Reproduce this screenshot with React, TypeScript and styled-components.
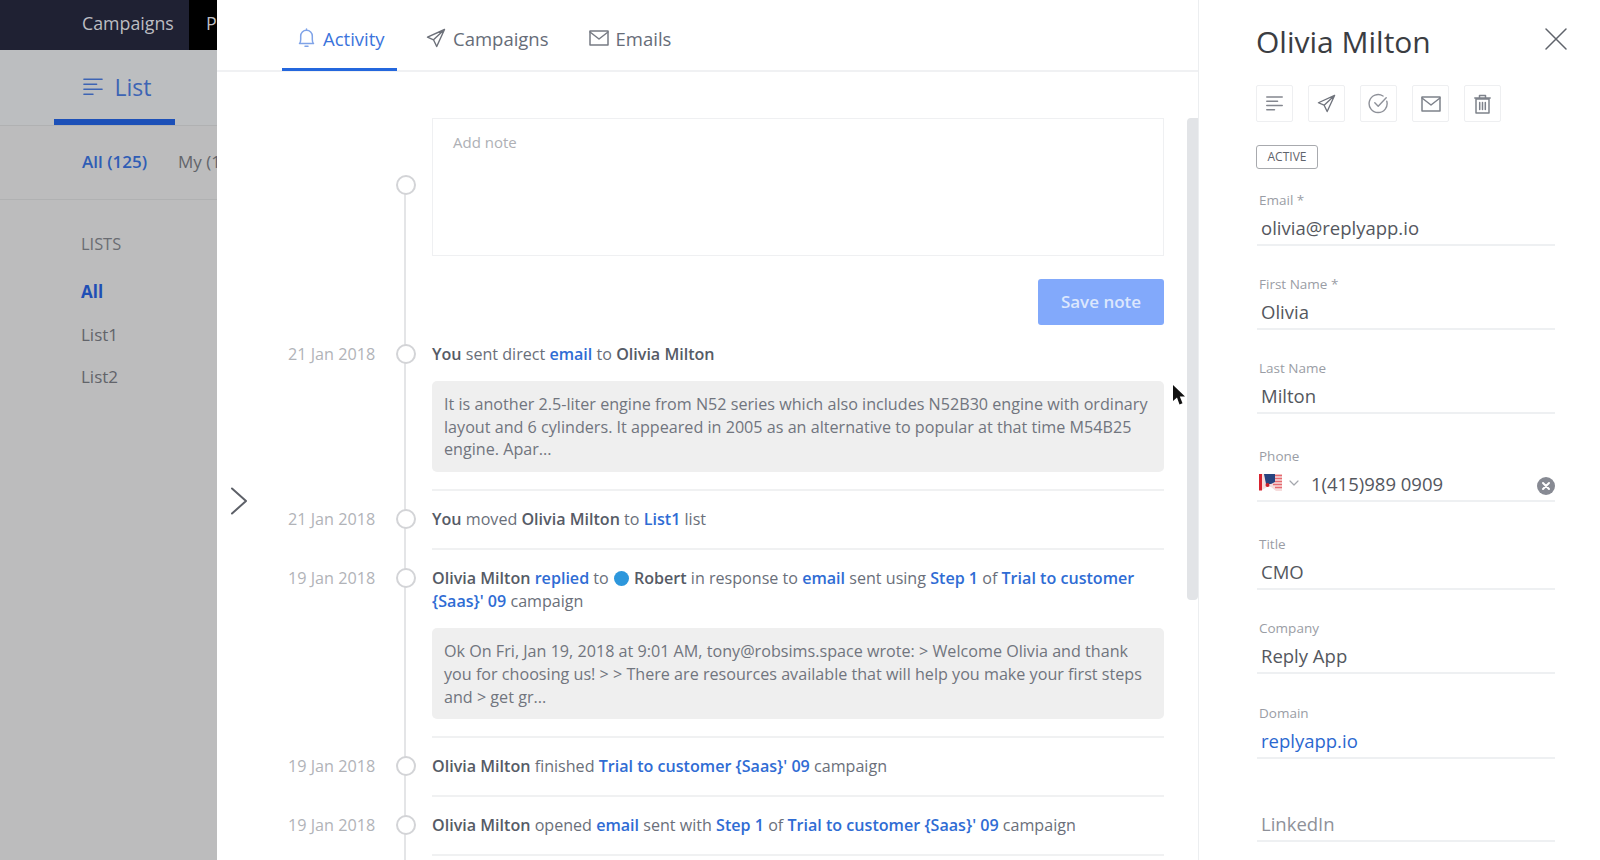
import React from "react";
import styled, { createGlobalStyle } from "styled-components";

const Global = createGlobalStyle`
  html, body { margin: 0; padding: 0; height: 100%; overflow: hidden; background: #fff; }
  body { font-family: "Open Sans", "Liberation Sans", sans-serif; -webkit-font-smoothing: antialiased; }
  * { box-sizing: border-box; }
`;

const Page = styled.div`
  display: flex;
  width: 1600px;
  height: 860px;
  overflow: hidden;
  position: relative;
`;

const Sidebar = styled.aside`
  width: 217px;
  flex: none;
  background: #bcbcbd;
  overflow: hidden;
`;
const TopBar = styled.div`
  height: 50px;
  background: #1f2133;
  display: flex;
  white-space: nowrap;
`;
const TopItem = styled.div<{ $black?: boolean }>`
  flex: none;
  height: 50px;
  line-height: 46px;
  font-size: 17.8px;
  color: #bcbdc2;
  padding: 0 15px 0 ${(p) => (p.$black ? "17px" : "82px")};
  background: ${(p) => (p.$black ? "#000" : "transparent")};
  width: ${(p) => (p.$black ? "40px" : "189px")};
`;
const SideTabs = styled.div`
  height: 76px;
  border-bottom: 1px solid #b0b1b2;
  padding-left: 54px;
  background: #bcbec0;
`;
const SideTab = styled.div`
  width: 121px;
  height: 75px;
  border-bottom: 6px solid #1c50b8;
  display: flex;
  align-items: center;
  justify-content: center;
  gap: 12px;
  font-size: 23px;
  color: #3d64b4;
  padding: 4px 0 0 5px;
`;
const FilterBar = styled.div`
  height: 74px;
  border-bottom: 1px solid #b0b1b2;
  display: flex;
  align-items: center;
  padding: 0 0 2px 82px;
  gap: 31px;
  font-size: 17px;
  white-space: nowrap;
`;
const FilterActive = styled.span`
  color: #2f5db5;
  font-weight: 600;
`;
const FilterItem = styled.span`
  color: #62646a;
`;
const SideList = styled.div`
  padding: 32px 0 0 81px;
  display: flex;
  flex-direction: column;
`;
const SideHeading = styled.div`
  font-size: 16.4px;
  color: #6a6c72;
  line-height: 24px;
  margin-bottom: 24px;
`;
const SideItem = styled.div<{ $active?: boolean }>`
  font-size: 17px;
  line-height: 24px;
  height: 42.5px;
  color: ${(p) => (p.$active ? "#1f4fb5" : "#62646a")};
  font-weight: ${(p) => (p.$active ? 700 : 400)};
`;

const Main = styled.main`
  width: 982px;
  flex: none;
  position: relative;
  border-right: 1px solid #eceef0;
  overflow: hidden;
`;
const MainTabs = styled.div`
  height: 72px;
  border-bottom: 2px solid #f0f1f3;
  padding-left: 65px;
  display: flex;
`;
const MainTab = styled.div<{ $active?: boolean }>`
  height: 71px;
  display: flex;
  align-items: center;
  gap: ${(p) => (p.$active ? "8px" : "7px")};
  padding: 8px ${(p) => (p.$active ? "11px 0 16px" : "0 0 0")};
  margin-right: ${(p) => (p.$active ? "29px" : "40px")};
  width: ${(p) => (p.$active ? "115px" : "auto")};
  font-size: 18.5px;
  white-space: nowrap;
  color: ${(p) => (p.$active ? "#3b74dc" : "#666c78")};
  border-bottom: ${(p) => (p.$active ? "3px solid #2467dd" : "3px solid transparent")};
`;
const Chevron = styled.div`
  position: absolute;
  left: 13px;
  top: 487px;
  line-height: 0;
`;
const Scrollbar = styled.div`
  position: absolute;
  right: 0;
  top: 118px;
  width: 11px;
  height: 482px;
  border-radius: 4px 0 4px 4px;
  background: #e2e4e7;
`;
const Timeline = styled.div`
  position: relative;
  padding: 46px 0 0 71px;
  width: 948px;
  &::before {
    content: "";
    position: absolute;
    left: 187px;
    top: 122px;
    bottom: 0;
    width: 2px;
    background: #e4e5e7;
  }
`;
const Row = styled.div`
  display: grid;
  grid-template-columns: 91px 53px 732px;
  align-items: start;
`;
const DateText = styled.div`
  font-size: 16.2px;
  line-height: 24px;
  color: #b1b3b8;
  white-space: nowrap;
`;
const MarkerCell = styled.div`
  display: flex;
  justify-content: center;
  position: relative;
`;
const Marker = styled.span<{ $top?: number }>`
  width: 20px;
  height: 20px;
  margin-top: ${(p) => p.$top ?? 2}px;
  border: 2px solid #d3d4d7;
  border-radius: 50%;
  background: #fff;
  position: relative;
  z-index: 1;
`;
const NoteBox = styled.div`
  height: 138px;
  border: 1px solid #eff0f2;
  padding: 11px 20px;
  font-size: 15px;
  line-height: 24px;
  color: #aeb0b5;
`;
const SaveRow = styled.div`
  grid-column: 3;
  display: flex;
  justify-content: flex-end;
  margin: 23px 0 17px;
`;
const SaveButton = styled.button`
  width: 126px;
  height: 46px;
  border: 0;
  border-radius: 3px;
  background: #82a9fb;
  color: #dce7fd;
  font: 600 17px "Open Sans", sans-serif;
  padding: 0 0 2px;
`;
const Body = styled.div`
  padding-bottom: 16.5px;
  border-bottom: 2px solid #f0f1f2;
  margin-bottom: 16.5px;
`;
const Sentence = styled.div`
  font-size: 16.1px;
  line-height: 23px;
  color: #6a6f7a;
  margin-top: 1px;
`;
const B = styled.b`
  font-weight: 600;
  color: #565b66;
`;
const A = styled.span`
  color: #2f6cd4;
  font-weight: 600;
`;
const Dot = styled.span`
  display: inline-block;
  width: 15px;
  height: 15px;
  border-radius: 50%;
  background: #2d97dc;
  vertical-align: -2px;
  margin: 0 5px 0 1px;
`;
const Quote = styled.div`
  margin-top: 15px;
  background: #efefef;
  border-radius: 5px;
  padding: 12px 11px 11px 12px;
  font-size: 16.15px;
  line-height: 22.7px;
  color: #71757e;
`;

const Panel = styled.aside`
  flex: 1;
  padding: 21px 0 0 57px;
  position: relative;
  overflow: hidden;
`;
const Title = styled.h1`
  margin: 0;
  font-size: 30px;
  font-weight: 400;
  line-height: 42px;
  color: #3b3d42;
`;
const Close = styled.button`
  position: absolute;
  top: 27px;
  right: 32px;
  border: 0;
  padding: 0;
  background: none;
  line-height: 0;
`;
const Actions = styled.div`
  display: flex;
  gap: 15px;
  margin-top: 22px;
`;
const ActionBtn = styled.div`
  width: 37px;
  height: 37px;
  border: 1px solid #eeeff1;
  border-radius: 2px;
  display: flex;
  align-items: center;
  justify-content: center;
`;
const Status = styled.div`
  width: 62px;
  height: 24px;
  margin: 23px 0 21px;
  border: 1px solid #a8aaae;
  border-radius: 3px;
  font-size: 12px;
  line-height: 22px;
  text-align: center;
  color: #5f636b;
`;
const Field = styled.div<{ $h: number }>`
  height: ${(p) => p.$h}px;
  width: 298px;
  margin-left: 1px;
`;
const FieldLabel = styled.div`
  font-size: 13.5px;
  line-height: 20px;
  color: #9a9da5;
  padding-left: 2px;
`;
const FieldValue = styled.div<{ $link?: boolean; $muted?: boolean }>`
  font-size: 18.5px;
  line-height: 28px;
  height: 35px;
  padding: 3px 0 0 4px;
  margin-top: 1px;
  color: ${(p) => (p.$link ? "#2b68d0" : p.$muted ? "#8e9199" : "#54575e")};
  border-bottom: 2px solid #eef0f2;
`;
const PhoneValue = styled(FieldValue)`
  display: flex;
  align-items: flex-start;
  padding-left: 2px;
`;
const PhoneFlag = styled.span`
  display: flex;
  align-items: center;
  gap: 6px;
  width: 52px;
  height: 26px;
  flex: none;
`;
const PhoneClear = styled.span`
  margin-left: auto;
  line-height: 0;
  padding-top: 7px;
`;
const Cursor = styled.div`
  position: absolute;
  left: 1172px;
  top: 385px;
  line-height: 0;
`;

const iconStroke = { fill: "none", strokeLinecap: "round", strokeLinejoin: "round" } as const;

const Lines = ({ c, w = 22, sw = 1.6 }: { c: string; w?: number; sw?: number }) => (
  <svg width={w} height={w} viewBox="0 0 22 22" {...iconStroke} stroke={c} strokeWidth={sw}>
    <path d="M1 2.5h20M1 8h14M1 13.5h20M1 19h10" />
  </svg>
);
const Bell = () => (
  <svg width="17" height="20" viewBox="0 0 17 20" {...iconStroke} stroke="#7fa3e8" strokeWidth="1.5">
    <path d="M1.5 15.5c1-1 1.2-2 1.2-4V8c0-3.2 2.4-5.8 5.8-5.8s5.8 2.6 5.8 5.8v3.5c0 2 .2 3 1.2 4zM7 18.2h3M8.5 1v1" />
  </svg>
);
const Plane = ({ s = 20, c = "#6c7079" }: { s?: number; c?: string }) => (
  <svg width={s} height={s} viewBox="0 0 20 20" {...iconStroke} stroke={c} strokeWidth="1.4">
    <path d="M18.5 1.5 1.5 9.2l6 2.6 3.2 6.7zM18.5 1.5 7.5 11.8" />
  </svg>
);
const Mail = ({ w = 20, c = "#777b84" }: { w?: number; c?: string }) => (
  <svg width={w} height={w * 0.8} viewBox="0 0 20 16" {...iconStroke} stroke={c} strokeWidth="1.5">
    <rect x="1" y="1" width="18" height="14" />
    <path d="M1 2l9 7 9-7" />
  </svg>
);
const Check = () => (
  <svg width="21" height="21" viewBox="0 0 21 21" {...iconStroke} stroke="#8e9199" strokeWidth="1.4">
    <path d="M18.8 8.2A9 9 0 1 1 15 3M6.8 9.8l3.4 3.4 8-8.4" />
  </svg>
);
const Trash = () => (
  <svg width="17" height="20" viewBox="0 0 17 20" {...iconStroke} stroke="#7e828b" strokeWidth="1.5">
    <path d="M2 5h13v14H2zM.8 4h15.4M5.5 3.5V1.5h6v2M5.7 8.5v7M8.5 8.5v7M11.3 8.5v7" />
  </svg>
);
const Flag = () => (
  <svg width="24" height="17" viewBox="0 0 24 17">
    <path d="M0 0h23v17h-6L12 13H8l-5 3H0z" fill="#f6dcdc" />
    <path d="M0 0h3v16.5H0z" fill="#d8232f" />
    <path d="M5 0h11v8l-4 2H7z" fill="#26437f" />
    <circle cx="8.5" cy="11" r="2" fill="#c8202c" />
    <path d="M16 1.5h7M16 4.5h7M16 7.5h7M14 10.5h9M16 13.5h7" stroke="#e56a70" strokeWidth="1.3" />
  </svg>
);

const fields = [
  { l: "Email *", v: "olivia@replyapp.io", h: 84 },
  { l: "First Name *", v: "Olivia", h: 84 },
  { l: "Last Name", v: "Milton", h: 87.5 },
  { l: "Title", v: "CMO", h: 84 },
  { l: "Company", v: "Reply App", h: 85 },
  { l: "Domain", v: "replyapp.io", h: 103, link: true },
];

export default function App() {
  return (
    <Page>
      <Global />
      <Sidebar>
        <TopBar>
          <TopItem>Campaigns</TopItem>
          <TopItem $black>P</TopItem>
        </TopBar>
        <SideTabs>
          <SideTab>
            <Lines c="#3d64b4" w={20} />
            List
          </SideTab>
        </SideTabs>
        <FilterBar>
          <FilterActive>All (125)</FilterActive>
          <FilterItem>My (1</FilterItem>
        </FilterBar>
        <SideList>
          <SideHeading>LISTS</SideHeading>
          <SideItem $active>All</SideItem>
          <SideItem>List1</SideItem>
          <SideItem>List2</SideItem>
        </SideList>
      </Sidebar>

      <Main>
        <MainTabs>
          <MainTab $active>
            <Bell />
            Activity
          </MainTab>
          <MainTab>
            <Plane />
            Campaigns
          </MainTab>
          <MainTab>
            <Mail />
            Emails
          </MainTab>
        </MainTabs>
        <Chevron>
          <svg width="18" height="28" viewBox="0 0 18 28" {...iconStroke} stroke="#5d6068" strokeWidth="2">
            <path d="M2 1.5 16 14 2 26.5" />
          </svg>
        </Chevron>
        <Scrollbar />
        <Timeline>
          <Row>
            <span />
            <MarkerCell>
              <Marker $top={57} />
            </MarkerCell>
            <NoteBox>Add note</NoteBox>
            <SaveRow>
              <SaveButton>Save note</SaveButton>
            </SaveRow>
          </Row>
          <Row>
            <DateText>21 Jan 2018</DateText>
            <MarkerCell>
              <Marker />
            </MarkerCell>
            <Body>
              <Sentence>
                <B>You</B> sent direct <A>email</A> to <B>Olivia Milton</B>
              </Sentence>
              <Quote>
                It is another 2.5-liter engine from N52 series which also includes N52B30 engine with ordinary layout
                and 6 cylinders. It appeared in 2005 as an alternative to popular at that time M54B25 engine. Apar...
              </Quote>
            </Body>
          </Row>
          <Row>
            <DateText>21 Jan 2018</DateText>
            <MarkerCell>
              <Marker />
            </MarkerCell>
            <Body>
              <Sentence>
                <B>You</B> moved <B>Olivia Milton</B> to <A>List1</A> list
              </Sentence>
            </Body>
          </Row>
          <Row>
            <DateText>19 Jan 2018</DateText>
            <MarkerCell>
              <Marker />
            </MarkerCell>
            <Body>
              <Sentence>
                <B>Olivia Milton</B> <A>replied</A> to <Dot />
                <B>Robert</B> in response to <A>email</A> sent using <A>Step 1</A> of{" "}
                <A>Trial to customer {"{Saas}"}' 09</A> campaign
              </Sentence>
              <Quote>
                Ok On Fri, Jan 19, 2018 at 9:01 AM, tony@robsims.space wrote: &gt; Welcome Olivia and thank you for
                choosing us! &gt; &gt; There are resources available that will help you make your first steps and &gt;
                get gr...
              </Quote>
            </Body>
          </Row>
          <Row>
            <DateText>19 Jan 2018</DateText>
            <MarkerCell>
              <Marker />
            </MarkerCell>
            <Body>
              <Sentence>
                <B>Olivia Milton</B> finished <A>Trial to customer {"{Saas}"}' 09</A> campaign
              </Sentence>
            </Body>
          </Row>
          <Row>
            <DateText>19 Jan 2018</DateText>
            <MarkerCell>
              <Marker />
            </MarkerCell>
            <Body>
              <Sentence>
                <B>Olivia Milton</B> opened <A>email</A> sent with <A>Step 1</A> of{" "}
                <A>Trial to customer {"{Saas}"}' 09</A> campaign
              </Sentence>
            </Body>
          </Row>
        </Timeline>
      </Main>

      <Panel>
        <Title>Olivia Milton</Title>
        <Close aria-label="Close">
          <svg width="24" height="24" viewBox="0 0 24 24" {...iconStroke} stroke="#5f636b" strokeWidth="1.5">
            <path d="M2 2l20 20M22 2 2 22" />
          </svg>
        </Close>
        <Actions>
          <ActionBtn>
            <Lines c="#84878f" w={17} sw={1.9} />
          </ActionBtn>
          <ActionBtn>
            <Plane s={19} c="#6f737c" />
          </ActionBtn>
          <ActionBtn>
            <Check />
          </ActionBtn>
          <ActionBtn>
            <Mail w={20} c="#7e828b" />
          </ActionBtn>
          <ActionBtn>
            <Trash />
          </ActionBtn>
        </Actions>
        <Status>ACTIVE</Status>
        {fields.slice(0, 3).map((f) => (
          <Field key={f.l} $h={f.h}>
            <FieldLabel>{f.l}</FieldLabel>
            <FieldValue>{f.v}</FieldValue>
          </Field>
        ))}
        <Field $h={88}>
          <FieldLabel>Phone</FieldLabel>
          <PhoneValue>
            <PhoneFlag>
              <Flag />
              <svg width="10" height="6" viewBox="0 0 10 6" {...iconStroke} stroke="#a5a8ae" strokeWidth="1.2">
                <path d="M1 1l4 4 4-4" />
              </svg>
            </PhoneFlag>
            1(415)989 0909
            <PhoneClear>
              <svg width="18" height="18" viewBox="0 0 18 18">
                <circle cx="9" cy="9" r="9" fill="#878a93" />
                <path d="M6 6l6 6M12 6l-6 6" stroke="#fff" strokeWidth="2" strokeLinecap="round" />
              </svg>
            </PhoneClear>
          </PhoneValue>
        </Field>
        {fields.slice(3).map((f) => (
          <Field key={f.l} $h={f.h}>
            <FieldLabel>{f.l}</FieldLabel>
            <FieldValue $link={f.link}>{f.v}</FieldValue>
          </Field>
        ))}
        <Field $h={40}>
          <FieldValue $muted>LinkedIn</FieldValue>
        </Field>
      </Panel>

      <Cursor>
        <svg width="13" height="21" viewBox="0 0 13 21">
          <path d="M1 0v16l4-3.5 2.5 7 3-1.2-2.7-6.8H13z" fill="#111" />
        </svg>
      </Cursor>
    </Page>
  );
}
